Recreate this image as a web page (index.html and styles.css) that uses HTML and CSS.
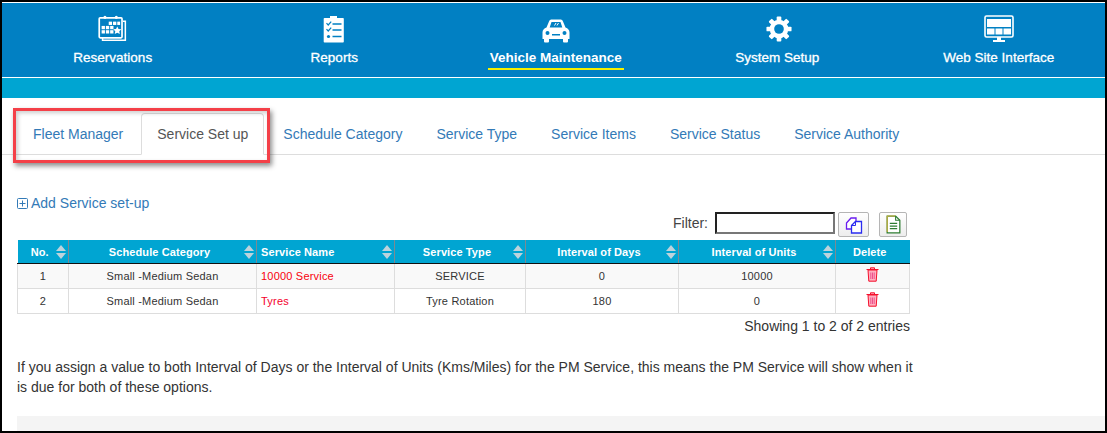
FILE: index.html
```html
<!DOCTYPE html>
<html lang="en">
<head>
<meta charset="utf-8">
<title>Service Set up</title>
<link rel="stylesheet" href="styles.css">
</head>
<body>
<div class="frame">
  <header class="topnav">
    <a class="nav-item">
      <svg class="nav-icon" width="30" height="28" viewBox="0 0 31 29.500" preserveAspectRatio="xMidYMin" fill="none" stroke="#fff">
        <path d="M4.500 24v2.500h24V6.500H26" stroke-width="1.600"/>
        <rect x="1" y="3" width="24" height="21" rx="1" stroke-width="1.800"/>
        <circle cx="7" cy="2.500" r="1.600" fill="#fff" stroke="none"/><circle cx="19" cy="2.500" r="1.600" fill="#fff" stroke="none"/>
        <g fill="#fff" stroke="none">
          <rect x="11" y="7" width="3.500" height="3.500"/><rect x="15.500" y="7" width="3.500" height="3.500"/><rect x="20" y="7" width="3" height="3.500"/>
          <rect x="3.500" y="11.500" width="3.500" height="3.500"/><rect x="8" y="11.500" width="3.500" height="3.500"/><rect x="12.500" y="11.500" width="3.500" height="3.500"/>
          <rect x="3.500" y="16" width="3.500" height="3.500"/><rect x="8" y="16" width="3.500" height="3.500"/><rect x="12.500" y="16" width="3.500" height="3.500"/>
          <path d="M20 12l1.300 2.800 3 .3-2.200 2 .6 3-2.700-1.500-2.700 1.500.6-3-2.200-2 3-.3z"/>
        </g>
      </svg>
      <span class="nav-label">Reservations</span>
    </a>
    <a class="nav-item">
      <svg class="nav-icon" width="22" height="28" viewBox="0 0 22 28">
        <path fill="#fff" d="M1.500 3H7V1h7v2h6a.8.8 0 0 1 .8.8v23a.8.8 0 0 1-.8.8H1.500a.8.8 0 0 1-.8-.8v-23A.8.8 0 0 1 1.500 3z"/>
        <g fill="none" stroke="#0180c3">
          <path d="M3.500 8.200l1.700 1.800 3-3.400M3.500 14.200l1.700 1.800 3-3.400" stroke-width="1.200"/>
          <path d="M9.500 9h9M9.500 15h9M9.500 21.500h9" stroke-width="1.600"/>
        </g>
        <circle cx="5.500" cy="21.500" r="1.600" fill="#0180c3"/>
      </svg>
      <span class="nav-label">Reports</span>
    </a>
    <a class="nav-item">
      <svg class="nav-icon" width="30" height="28" viewBox="0 0 30 28">
        <path fill="#fff" fill-rule="evenodd" d="M8 6.500C8.500 5 9.500 4.500 11 4.500h8c1.500 0 2.500.5 3 2l2.500 6c2.500 1 4 2.500 4 5v6.500h-1.500v2.500a1 1 0 0 1-1 1h-3a1 1 0 0 1-1-1V24h-14v2.500a1 1 0 0 1-1 1h-3a1 1 0 0 1-1-1V24H1.500v-6.500c0-2.500 1.500-4 4-5zM10.500 7L8.700 12.500h12.600L19.500 7zM6.500 16a2 2 0 1 0 0 4 2 2 0 0 0 0-4zM23.500 16a2 2 0 1 0 0 4 2 2 0 0 0 0-4zM11 19v1.500h8V19z"/>
        <path d="M13.500 10.500l1.500-2.500M16 10.500l1.500-2.500" stroke="#fff" stroke-width="1"/>
      </svg>
      <span class="nav-label nav-active">Vehicle Maintenance</span>
    </a>
    <a class="nav-item">
      <svg class="nav-icon nav-gear" width="26" height="28" viewBox="0 0 28 28">
        <g fill="#fff">
          <rect x="11.500" y="0.500" width="5" height="27" rx="1"/>
          <rect x="11.500" y="0.500" width="5" height="27" rx="1" transform="rotate(45 14 14)"/>
          <rect x="11.500" y="0.500" width="5" height="27" rx="1" transform="rotate(90 14 14)"/>
          <rect x="11.500" y="0.500" width="5" height="27" rx="1" transform="rotate(135 14 14)"/>
        </g>
        <circle cx="14" cy="14" r="7.500" fill="none" stroke="#fff" stroke-width="5"/>
        <circle cx="14" cy="14" r="5.200" fill="#0180c3"/>
      </svg>
      <span class="nav-label">System Setup</span>
    </a>
    <a class="nav-item">
      <svg class="nav-icon" width="30" height="28" viewBox="0 0 30 28">
        <rect x="1" y="1" width="28" height="21" rx="1.500" fill="none" stroke="#fff" stroke-width="1.600"/>
        <g fill="#fff">
          <rect x="3" y="4" width="24" height="8"/>
          <rect x="3" y="13.500" width="7.500" height="6"/><rect x="11.500" y="13.500" width="7" height="6"/><rect x="19.500" y="13.500" width="7.500" height="6"/>
          <rect x="13" y="22" width="4" height="3.500"/><rect x="9" y="25" width="12" height="2"/>
        </g>
      </svg>
      <span class="nav-label">Web Site Interface</span>
    </a>
  </header>
  <div class="subbar"></div>

  <main class="content">
    <ul class="tabs">
      <li class="tab tab-first">Fleet Manager</li>
      <li class="tab tab-active">Service Set up</li>
      <li class="tab">Schedule Category</li>
      <li class="tab">Service Type</li>
      <li class="tab">Service Items</li>
      <li class="tab">Service Status</li>
      <li class="tab">Service Authority</li>
    </ul>

    <div class="panel">
      <a class="add-link">
        <svg width="11" height="11" viewBox="0 0 11 11" fill="none" stroke="#337ab7"><rect x=".5" y=".5" width="10" height="10" rx="1"/><path d="M2.500 5.500h6M5.500 2.500v6"/></svg>
        <span>Add Service set-up</span>
      </a>

      <div class="filter-row">
        <label class="filter-label" for="flt">Filter:</label>
        <input id="flt" class="filter-input" type="text">
        <button class="tool-btn tool-copy" type="button" aria-label="Copy">
          <svg width="18" height="18" viewBox="0 0 18 18" fill="#fff" stroke-width="1.300">
            <path d="M1.500 7L6 2h5v11H1.500z" stroke="#6a1cf0"/>
            <path d="M6.500 9.500L10.500 5.500h6V17H6.500z" stroke="#2a2cf0"/>
            <path d="M10.500 5.500v4h-4" fill="none" stroke="#2a2cf0" stroke-width="1"/>
          </svg>
        </button>
        <button class="tool-btn tool-doc" type="button" aria-label="Export">
          <svg width="15" height="19" viewBox="0 0 14 18" fill="none">
            <path d="M1 1h8l4 4v12H1z" fill="#fff" stroke="#2e7d32" stroke-width="1.200"/>
            <path d="M1 1h8M1 1v15" stroke="#d2b23a"/>
            <path d="M9 1v4h4" stroke="#2e7d32"/>
            <path d="M3.500 8h7M3.500 10.500h7M3.500 13h7" stroke="#2e7d32" stroke-width="1.200"/>
          </svg>
        </button>
      </div>

      <table class="grid">
        <colgroup>
          <col class="c1"><col class="c2"><col class="c3"><col class="c4"><col class="c5"><col class="c6"><col class="c7">
        </colgroup>
        <thead>
          <tr>
            <th class="sort">No.</th>
            <th class="sort">Schedule Category</th>
            <th class="sort th-left">Service Name</th>
            <th class="sort">Service Type</th>
            <th class="sort">Interval of Days</th>
            <th class="sort">Interval of Units</th>
            <th>Delete</th>
          </tr>
        </thead>
        <tbody>
          <tr class="odd">
            <td>1</td><td>Small -Medium Sedan</td><td class="name name-service">10000 Service</td><td>SERVICE</td><td>0</td><td>10000</td>
            <td class="del"><svg width="13" height="15" viewBox="0 0 13 15"><path d="M4.500 2V.8h4V2M.5 2.500h12M2 3l.8 11.200h7.400L11 3z" fill="#ffb0c0" stroke="#f4102c" stroke-width="1"/><path d="M4.800 5.500v6.500M6.500 5.500v6.500M8.200 5.500v6.500" stroke="#ea3a80" stroke-width=".8"/></svg></td>
          </tr>
          <tr>
            <td>2</td><td>Small -Medium Sedan</td><td class="name">Tyres</td><td>Tyre Rotation</td><td>180</td><td>0</td>
            <td class="del"><svg width="13" height="15" viewBox="0 0 13 15"><path d="M4.500 2V.8h4V2M.5 2.500h12M2 3l.8 11.200h7.400L11 3z" fill="#ffb0c0" stroke="#f4102c" stroke-width="1"/><path d="M4.800 5.500v6.500M6.500 5.500v6.500M8.200 5.500v6.500" stroke="#ea3a80" stroke-width=".8"/></svg></td>
          </tr>
        </tbody>
      </table>
      <div class="info">Showing 1 to 2 of 2 entries</div>

      <p class="note">If you assign a value to both Interval of Days or the Interval of Units (Kms/Miles) for the PM Service, this means the PM Service will show when it is due for both of these options.</p>

      <div class="footer-bar"></div>
    </div>

    <div class="callout"></div>
  </main>
</div>
</body>
</html>
```

FILE: styles.css
```css
* { box-sizing: border-box; }
html, body { margin: 0; padding: 0; }
body {
  width: 1107px;
  height: 433px;
  overflow: hidden;
  font-family: "Liberation Sans", Arial, sans-serif;
  color: #333;
  background: #fff;
}
.frame {
  width: 1107px;
  height: 433px;
  border: 2px solid #000;
  overflow: hidden;
  display: flex;
  flex-direction: column;
  background: #fff;
}
.topnav {
  flex: none;
  height: 74px;
  margin-top: 1px;
  background: #0180c3;
  display: grid;
  grid-template-columns: repeat(5, 221.5px);
}
.nav-item {
  display: flex;
  flex-direction: column;
  align-items: center;
  padding-top: 12px;
  color: #fff;
}
.nav-icon { display: block; height: 28px; }
.nav-gear { margin-left: 3px; }
.nav-label {
  margin-top: 6px;
  font-size: 13.500px;
  line-height: 17px;
  font-weight: 400;
  -webkit-text-stroke: .3px #fff;
  padding: 0 2px 2px;
  color: #fff;
}
.nav-active {
  font-weight: 700;
  -webkit-text-stroke: 0;
  border-bottom: 2px solid #f6f000;
}
.subbar {
  flex: none;
  height: 21px;
  border-top: 1px solid #fff;
  background: #00a5d2;
}
.content {
  flex: 1;
  position: relative;
  min-height: 0;
}
.tabs {
  list-style: none;
  margin: 15px 0 0;
  padding: 0 0 0 13px;
  height: 42px;
  display: flex;
  border-bottom: 1px solid #ddd;
}
.tab {
  height: 42px;
  padding: 0 16px;
  font-size: 14px;
  line-height: 41px;
  color: #337ab7;
  border: 1px solid transparent;
  border-radius: 4px 4px 0 0;
}
.tab-first { padding: 0 17px; }
.tab-active {
  color: #555;
  background: #fff;
  border-color: #ddd #ddd #fff;
  padding: 0 15px;
  margin-right: 2px;
}
.panel {
  padding: 0 0 0 15px;
}
.add-link {
  display: flex;
  align-items: center;
  gap: 3px;
  margin-top: 39px;
  height: 18px;
  font-size: 14px;
  color: #337ab7;
}
.filter-row {
  display: flex;
  align-items: flex-start;
  width: 893px;
  height: 28px;
  justify-content: flex-start;
  padding-left: 656px;
}
.filter-label {
  font-size: 14px;
  line-height: 22px;
  width: 42px;
  color: #444;
}
.filter-input {
  width: 120px;
  height: 22px;
  padding: 0 4px;
  border: 2px solid;
  border-color: #222 #777 #777 #222;
  background: #fff;
}
.tool-btn {
  width: 31px;
  height: 25px;
  margin-left: 3px;
  padding: 0;
  display: flex;
  align-items: center;
  justify-content: center;
  background: linear-gradient(#fff, #ededed);
  border: 1px solid #b5b5b5;
  border-radius: 2px;
}
.tool-doc { width: 28px; margin-left: 10px; }
.grid {
  width: 892px;
  table-layout: fixed;
  border-collapse: collapse;
  font-size: 11px;
}
.c1 { width: 51px; }
.c2 { width: 188px; }
.c3 { width: 138px; }
.c4 { width: 131px; }
.c5 { width: 153px; }
.c6 { width: 157px; }
.c7 { width: 74px; }
.grid th {
  position: relative;
  height: 23px;
  padding: 1px 6px 0 0;
  background: #00a5d2;
  color: #fff;
  font-weight: 700;
  letter-spacing: .1px;
  text-align: center;
  border-left: 1px solid #7c8a92;
  border-bottom: 1px solid #111;
}
.grid th:first-child { border-left: 0; }
.grid th.th-left { text-align: left; padding-left: 4px; }
.sort::before, .sort::after {
  content: "";
  position: absolute;
  right: 2px;
  width: 0;
  height: 0;
  border-left: 5px solid transparent;
  border-right: 5px solid transparent;
}
.sort::before { top: 5px; border-bottom: 6px solid #bcd3dc; }
.sort::after { bottom: 4px; border-top: 6px solid #bcd3dc; }
.grid td {
  height: 25px;
  padding: 0;
  text-align: center;
  letter-spacing: .2px;
  border: 1px solid #ddd;
  color: #333;
}
.grid .odd td { background: #f9f9f9; }
.grid td.name {
  text-align: left;
  padding-left: 4px;
  color: #f4002c;
}
.grid td.name-service { color: #f8000c; }
.grid td.del { vertical-align: top; padding: 3px 1px 0 0; }
.del svg { display: inline-block; }
.info {
  width: 893px;
  margin-top: 3px;
  font-size: 14px;
  line-height: 18px;
  text-align: right;
}
.note {
  width: 900px;
  margin: 22px 0 0;
  font-size: 14px;
  line-height: 20px;
  color: #333;
}
.footer-bar {
  height: 30px;
  margin-top: 19px;
  background: #f4f4f4;
}
.callout {
  position: absolute;
  left: 11px;
  top: 10px;
  width: 257px;
  height: 55px;
  border: 3px solid #f44048;
  box-shadow: 2px 3px 5px rgba(0, 0, 0, .45), inset 2px 2px 4px rgba(0, 0, 0, .2);
  pointer-events: none;
}
```
